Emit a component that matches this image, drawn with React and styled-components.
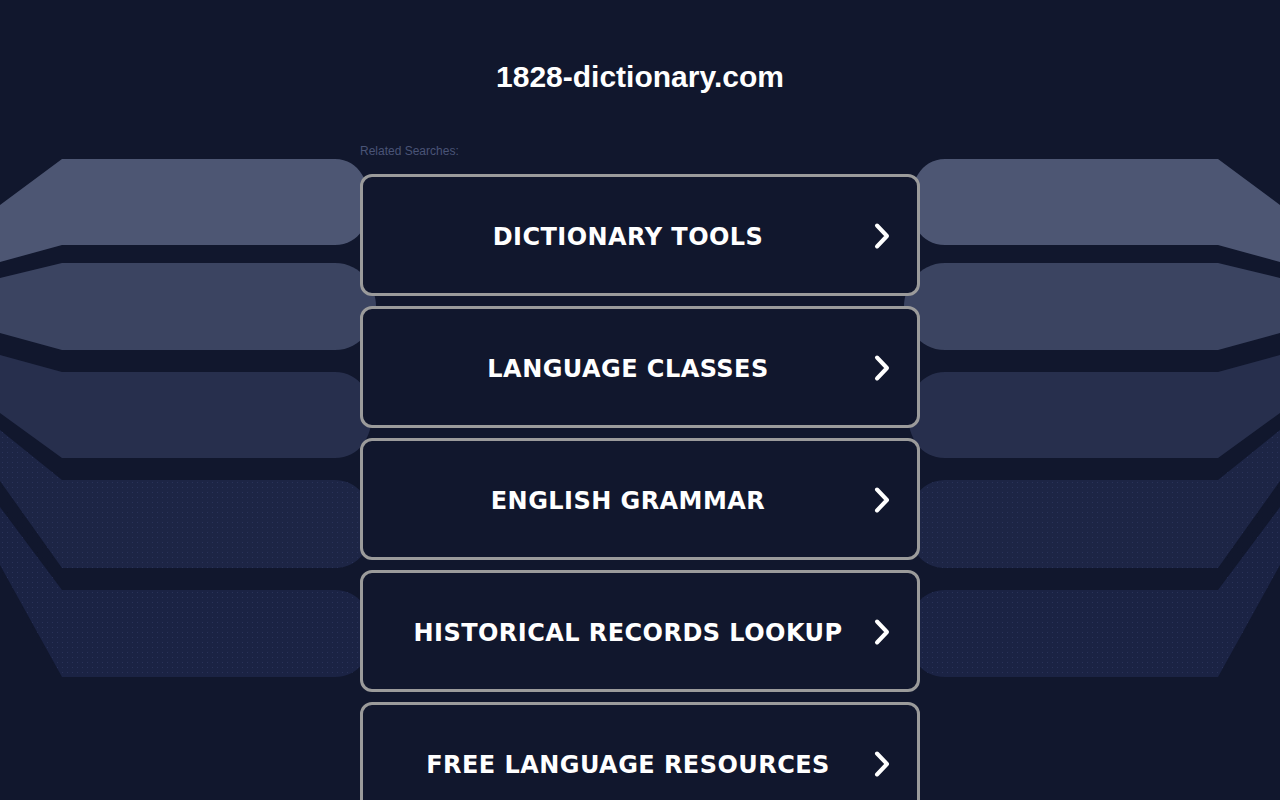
import React from "react";
import styled, { createGlobalStyle } from "styled-components";

const searches = [
  "DICTIONARY TOOLS",
  "LANGUAGE CLASSES",
  "ENGLISH GRAMMAR",
  "HISTORICAL RECORDS LOOKUP",
  "FREE LANGUAGE RESOURCES",
];

// left-hand bands; the right side is the same set mirrored
const bands = [
  {
    fill: "#4d5673",
    d: "M0,205 L62,159 L335,159 C360,159 370,185 370,202 C370,222 360,245 335,245 L62,245 L0,262 Z",
  },
  {
    fill: "#3b4461",
    d: "M0,278 L62,263 L335,263 C362,263 376,288 376,306 C376,325 362,350 335,350 L62,350 L0,333 Z",
  },
  {
    fill: "#272f4d",
    d: "M0,355 L62,372 L335,372 C360,372 372,395 372,415 C372,436 360,458 335,458 L62,458 L0,413 Z",
  },
  {
    fill: "#1d2545",
    dotted: true,
    d: "M0,430 L62,480 L335,480 C360,480 372,503 372,524 C372,546 360,568 335,568 L62,568 L0,481 Z",
  },
  {
    fill: "#1b2344",
    dotted: true,
    d: "M0,507 L62,590 L335,590 C360,590 372,612 372,633 C372,655 360,677 335,677 L62,677 L0,565 Z",
  },
];

function BandSet() {
  return (
    <>
      {bands.map((b, i) => (
        <g key={i}>
          <path d={b.d} fill={b.fill} />
          {b.dotted && <path d={b.d} fill="url(#dots)" />}
        </g>
      ))}
    </>
  );
}

function Backdrop() {
  return (
    <BackdropSvg viewBox="0 0 1280 800" width="1280" height="800">
      <defs>
        <pattern id="dots" width="5" height="5" patternUnits="userSpaceOnUse">
          <rect x="2" y="2" width="1" height="1" fill="#2a3359" />
        </pattern>
      </defs>
      <BandSet />
      <g transform="translate(1280,0) scale(-1,1)">
        <BandSet />
      </g>
    </BackdropSvg>
  );
}

function Chevron() {
  return (
    <svg width="20" height="28" viewBox="0 0 20 28">
      <path
        d="M5,3.5 L15,14 L5,24.5"
        fill="none"
        stroke="#ffffff"
        strokeWidth="4"
        strokeLinecap="round"
        strokeLinejoin="round"
      />
    </svg>
  );
}

export default function App() {
  return (
    <Page>
      <GlobalStyle />
      <Backdrop />
      <Content>
        <Domain>1828-dictionary.com</Domain>
        <Related>Related Searches:</Related>
        <List>
          {searches.map((s) => (
            <SearchButton key={s} href="#">
              <Label>{s}</Label>
              <Arrow>
                <Chevron />
              </Arrow>
            </SearchButton>
          ))}
        </List>
      </Content>
    </Page>
  );
}

const GlobalStyle = createGlobalStyle`
  html, body {
    margin: 0;
    padding: 0;
    background: #11172d;
  }
`;

const Page = styled.div`
  position: relative;
  width: 1280px;
  height: 800px;
  overflow: hidden;
  background: #11172d;
`;

const BackdropSvg = styled.svg`
  position: absolute;
  top: 0;
  left: 0;
  z-index: 0;
`;

const Content = styled.div`
  position: relative;
  z-index: 1;
  width: 560px;
  margin: 0 auto;
  padding-top: 59px;
  display: flex;
  flex-direction: column;
`;

const Domain = styled.h1`
  margin: 0;
  text-align: center;
  font-family: "Liberation Sans", Arial, sans-serif;
  font-weight: 700;
  font-size: 30px;
  line-height: 36px;
  color: #ffffff;
`;

const Related = styled.div`
  margin-top: 49px;
  font-family: "Liberation Sans", Arial, sans-serif;
  font-size: 12px;
  line-height: 14px;
  color: #4a5477;
`;

const List = styled.div`
  margin-top: 16px;
  display: flex;
  flex-direction: column;
  gap: 10px;
`;

const SearchButton = styled.a`
  box-sizing: border-box;
  height: 122px;
  display: flex;
  align-items: center;
  padding: 2px 11px 0 35px;
  border: 3px solid #9b9b9b;
  border-radius: 12px;
  background: #11172d;
  text-decoration: none;
`;

const Label = styled.span`
  flex: 1;
  padding-top: 2px;
  text-align: center;
  font-family: "DejaVu Sans", Verdana, sans-serif;
  font-weight: 700;
  font-size: 24px;
  letter-spacing: 0.45px;
  color: #ffffff;
  white-space: nowrap;
`;

const Arrow = styled.span`
  width: 48px;
  display: flex;
  justify-content: center;
  align-items: center;
`;
